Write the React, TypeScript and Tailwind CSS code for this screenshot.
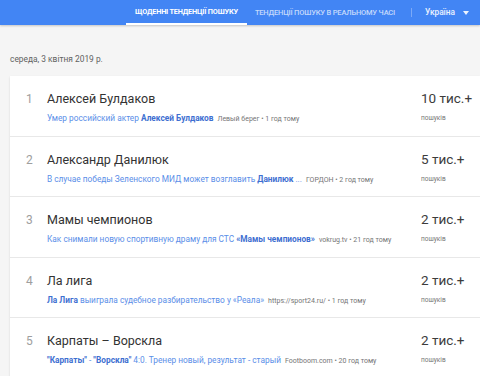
const rows = [
  {
    n: 1,
    title: "Алексей Булдаков",
    parts: [
      { t: "Умер российский актер ", b: false },
      { t: "Алексей Булдаков", b: true },
    ],
    src: "Левый берег • 1 год тому",
    count: "10 тис.+",
  },
  {
    n: 2,
    title: "Александр Данилюк",
    parts: [
      { t: "В случае победы Зеленского МИД может возглавить ", b: false },
      { t: "Данилюк", b: true },
      { t: " ...", b: false },
    ],
    src: "ГОРДОН • 2 год тому",
    count: "5 тис.+",
  },
  {
    n: 3,
    title: "Мамы чемпионов",
    parts: [
      { t: "Как снимали новую спортивную драму для СТС ", b: false },
      { t: "«Мамы чемпионов»", b: true },
    ],
    src: "vokrug.tv • 21 год тому",
    count: "2 тис.+",
  },
  {
    n: 4,
    title: "Ла лига",
    parts: [
      { t: "Ла Лига", b: true },
      { t: " выиграла судебное разбирательство у «Реала»", b: false },
    ],
    src: "https://sport24.ru/ • 1 год тому",
    count: "2 тис.+",
  },
  {
    n: 5,
    title: "Карпаты – Ворскла",
    parts: [
      { t: "\"Карпаты\"", b: true },
      { t: " - ", b: false },
      { t: "\"Ворскла\"", b: true },
      { t: " 4:0. Тренер новый, результат - старый", b: false },
    ],
    src: "Footboom.com • 20 год тому",
    count: "2 тис.+",
  },
];

export default function App() {
  return (
    <div className="w-[480px] h-[376px] overflow-hidden bg-[#f5f5f5] font-['Roboto',sans-serif]">
      <div className="h-[25px] bg-[#4285f4] flex items-stretch pl-[126px] shadow-[0_1px_2px_rgba(0,0,0,0.2)]">
        <div className="relative flex items-center px-[9px] text-[7.3px] font-bold text-white tracking-tight">
          ЩОДЕННІ ТЕНДЕНЦІЇ ПОШУКУ
          <div className="absolute left-0 right-0 bottom-0 h-[2px] bg-white" />
        </div>
        <div className="flex items-center pl-[8px] text-[7.5px] font-medium text-white/70 tracking-tight">
          ТЕНДЕНЦІЇ ПОШУКУ В РЕАЛЬНОМУ ЧАСІ
        </div>
        <div className="self-center w-px h-[9px] bg-white/30 ml-[16px]" />
        <div className="flex items-center ml-[13px] text-[8.3px] font-medium text-white/90">
          Україна
          <span className="ml-[8px] w-0 h-0 border-l-[3px] border-r-[3px] border-t-[4px] border-l-transparent border-r-transparent border-t-white/90" />
        </div>
      </div>

      <div className="pl-[10px] pt-[29px] text-[8.4px] text-[#616161] leading-[10px]">
        середа, 3 квітня 2019 р.
      </div>

      <div className="ml-[10px] mt-[12px] bg-white shadow-[0_1px_2px_rgba(0,0,0,0.12)]">
        {rows.map((r) => (
          <div key={r.n} className="h-[60.5px] border-b border-[#e8e8e8] flex">
            <div className="w-[37px] pt-[15px] pl-[16px] text-[12px] leading-[16px] text-[#9e9e9e]">
              {r.n}
            </div>
            <div className="flex-1 pt-[15px]">
              <div className="text-[12.5px] leading-[16px] text-[#333]">{r.title}</div>
              <div className="mt-[6px] text-[8.3px] leading-[10px] whitespace-nowrap">
                {r.parts.map((p, i) => (
                  <span
                    key={i}
                    className={p.b ? "font-bold text-[#3e6fd1]" : "text-[#5a8ee8]"}
                  >
                    {p.t}
                  </span>
                ))}
                <span className="ml-[4px] text-[7px] text-[#757575]">{r.src}</span>
              </div>
            </div>
            <div className="w-[59px] pt-[13px]">
              <div className="text-[13.5px] leading-[18px] text-[#3c3c3c]">{r.count}</div>
              <div className="mt-[6px] text-[6.5px] leading-[10px] text-[#757575]">пошуків</div>
            </div>
          </div>
        ))}
      </div>
    </div>
  );
}
